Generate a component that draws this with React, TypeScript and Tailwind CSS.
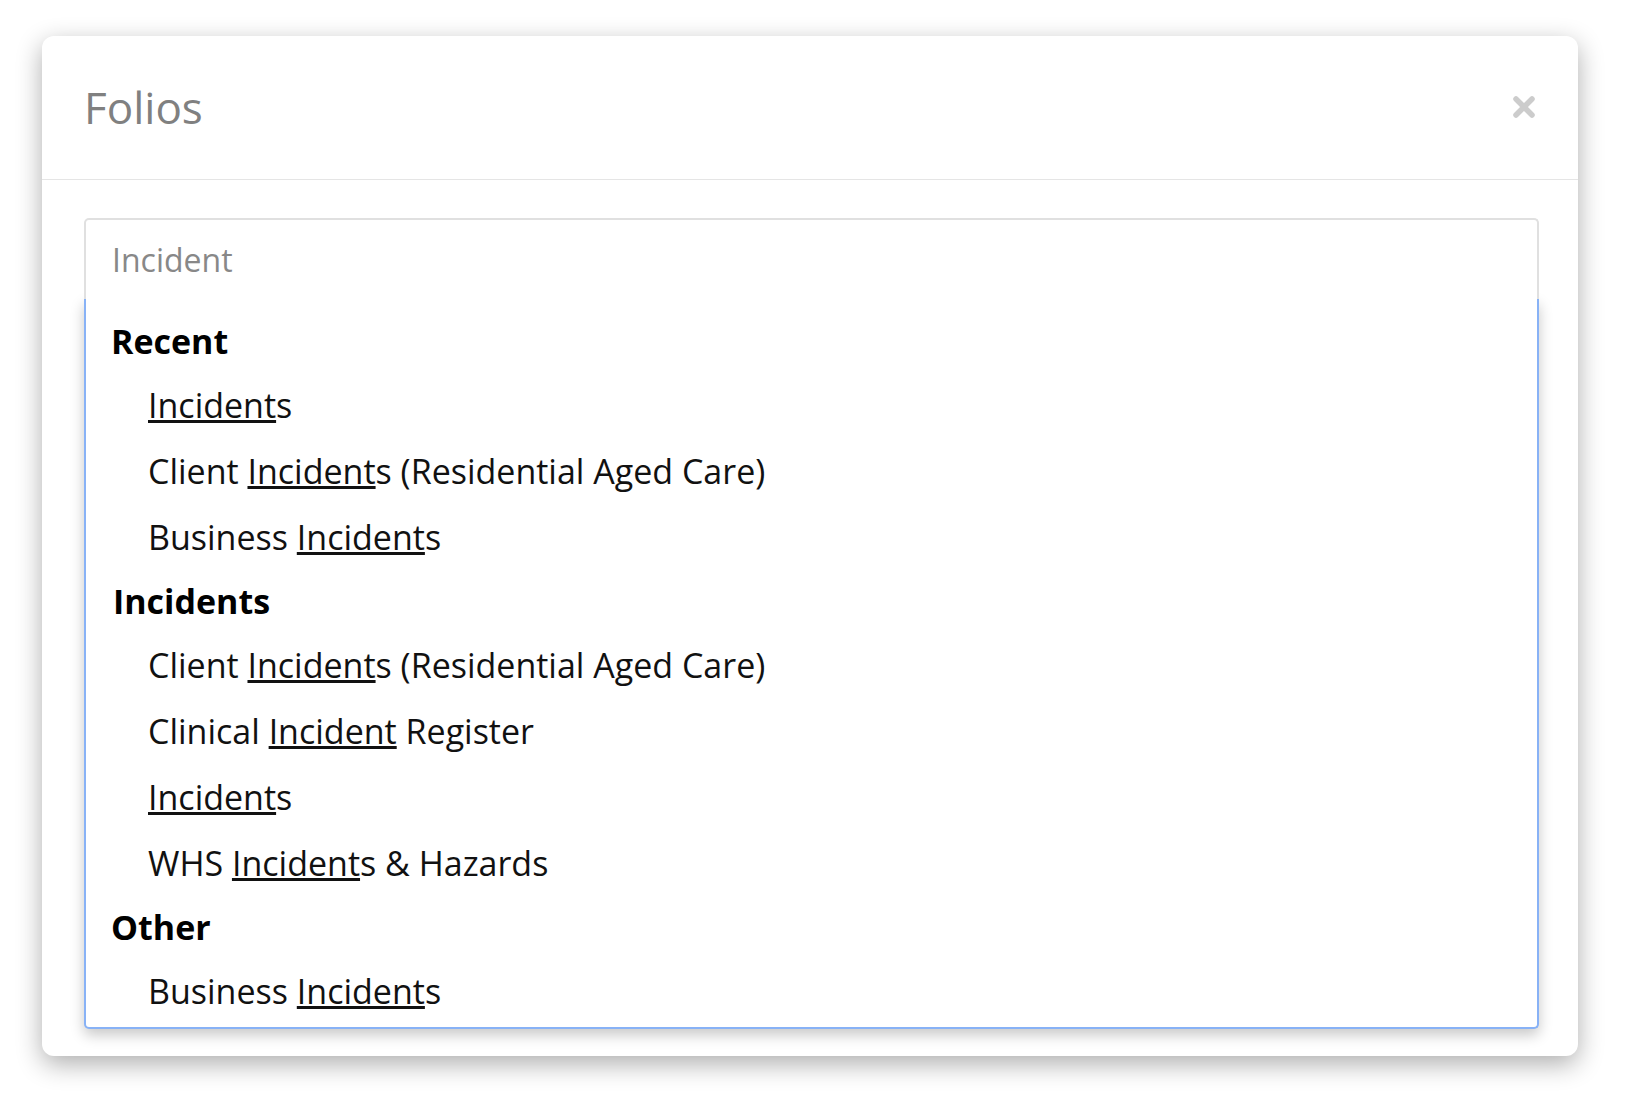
import React from 'react';

type Row =
  | { kind: 'heading'; label: string; indent?: boolean }
  | { kind: 'item'; before?: string; match: string; after?: string };

const rows: Row[] = [
  { kind: 'heading', label: 'Recent' },
  { kind: 'item', match: 'Incident', after: 's' },
  { kind: 'item', before: 'Client ', match: 'Incident', after: 's (Residential Aged Care)' },
  { kind: 'item', before: 'Business ', match: 'Incident', after: 's' },
  { kind: 'heading', label: 'Incidents', indent: true },
  { kind: 'item', before: 'Client ', match: 'Incident', after: 's (Residential Aged Care)' },
  { kind: 'item', before: 'Clinical ', match: 'Incident', after: ' Register' },
  { kind: 'item', match: 'Incident', after: 's' },
  { kind: 'item', before: 'WHS ', match: 'Incident', after: 's & Hazards' },
  { kind: 'heading', label: 'Other' },
  { kind: 'item', before: 'Business ', match: 'Incident', after: 's' },
];

function App() {
  return (
    <div className="min-h-screen bg-white pt-[36px] pl-[42px] pr-[50px] pb-[40px] font-['Open_Sans',sans-serif]">
      <div className="w-[1536px] rounded-[12px] bg-white shadow-[0_8px_26px_rgba(0,0,0,0.32)]">
        <div className="flex h-[144px] items-center justify-between border-b border-[#e5e5e5] pl-[42px] pr-[43px]">
          <h1 className="text-[44px] leading-none text-[#808080] -mt-[2px]">Folios</h1>
          <button className="-mt-[2px]" aria-label="Close">
            <svg width="22" height="22" viewBox="0 0 22 22">
              <path d="M3 3 L19 19 M19 3 L3 19" stroke="#cccccc" strokeWidth="5.5" strokeLinecap="round" />
            </svg>
          </button>
        </div>
        <div className="pt-[38px] pl-[42px] pr-[39px] pb-[27px]">
          <div className="relative z-10 flex h-[81px] items-center rounded-t-[5px] border-2 border-b-0 border-[#e0e0e0] bg-white pl-[26px]">
            <span className="text-[32px] text-[#888888]">Incident</span>
          </div>
          <div className="rounded-b-[5px] border-2 border-t-0 border-[#88b2f6] bg-white pt-[11px] pb-[3px] pl-[24px] shadow-[0_6px_14px_rgba(0,0,0,0.22)]">
            {rows.map((r, i) =>
              r.kind === 'heading' ? (
                <div
                  key={i}
                  className={
                    r.indent
                      ? 'flex h-[62px] items-center pl-[3px] text-[34px] font-bold text-black'
                      : 'flex h-[62px] items-center pl-[1px] text-[34px] font-bold text-black'
                  }
                >
                  {r.label}
                </div>
              ) : (
                <div key={i} className="flex h-[66px] items-center pl-[38px] text-[34px] text-[#111111]">
                  <span className="whitespace-pre">
                    {r.before}
                    <span className="underline">{r.match}</span>
                    {r.after}
                  </span>
                </div>
              )
            )}
          </div>
        </div>
      </div>
    </div>
  );
}

export default App;
